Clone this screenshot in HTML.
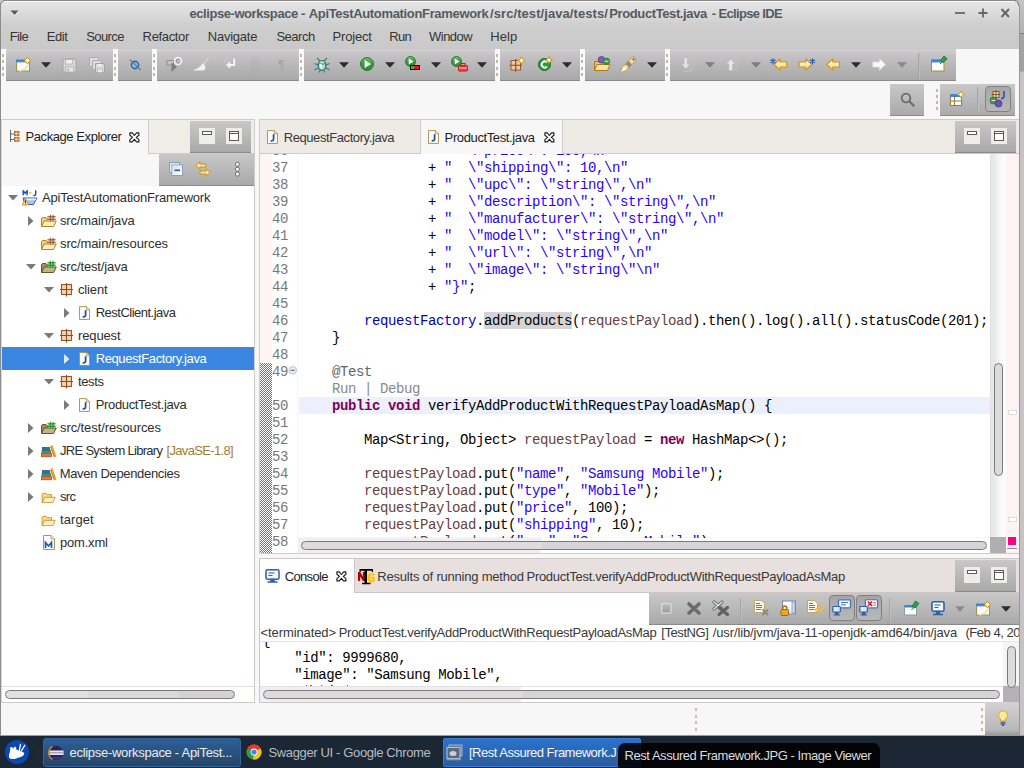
<!DOCTYPE html>
<html><head><meta charset="utf-8"><title>Eclipse IDE</title>
<style>
html,body{margin:0;padding:0;}
body{width:1024px;height:768px;overflow:hidden;background:#f7f7f7;font-family:"Liberation Sans",sans-serif;}
#root{position:relative;width:1024px;height:768px;overflow:hidden;background:#f7f7f7;}
.a{position:absolute;box-sizing:border-box;}
.t{position:absolute;white-space:pre;line-height:16px;height:16px;}
.s{font-family:"Liberation Sans",sans-serif;}
.m{font-family:"Liberation Mono",monospace;letter-spacing:-0.4014px;}
.clip{position:absolute;overflow:hidden;}
.k{color:#7f0055;font-weight:bold;}
.str{color:#2a00ff;}
.v{color:#6a3e3e;}
.f{color:#0000c0;}
.g{color:#646464;}
.occ{}
.cm{color:#8a8a8a;}

</style></head>
<body>
<div id="root">
<div class="a" style="left:1019px;top:0px;width:5px;height:735px;background:linear-gradient(#c4c4c4 0,#b2b2b2 33px,#7c7c7c 33px,#7c7c7c 34px,#a6a6a6 34px,#a0a0a0 71px,#c6c2c6 72px,#c6c2c6 100%);"></div>
<div class="a" style="left:0px;top:0px;width:1019px;height:49px;background:linear-gradient(#8a8a8a 0,#8a8a8a 1px,#fbfbfb 1px,#fbfbfb 2px,#e6e6e6 2px,#d2d2d2 22px,#cfcfcf 23px,#c9c9c9 49px);border-radius:5px 5px 0 0;"></div>
<div class="a" style="left:0px;top:0px;width:6px;height:6px;background:radial-gradient(circle at 6px 6px,rgba(0,0,0,0) 5px,#8a8a8a 5.2px,#8a8a8a 6px,#c8c8c8 6.3px);"></div>
<div class="a" style="left:1013px;top:0px;width:6px;height:6px;background:radial-gradient(circle at 0px 6px,rgba(0,0,0,0) 5px,#8a8a8a 5.2px,#8a8a8a 6px,#b8b8b8 6.3px);"></div>
<div class="a" style="left:0px;top:5px;width:1px;height:730px;background:#8c8c8c;"></div>
<div class="a" style="left:1019px;top:5px;width:1px;height:730px;background:#9a969a;"></div>
<svg class="a" style="left:10px;top:10px" width="10" height="6" viewBox="0 0 10 6"><path d="M0.5 0.5h8l-4 4.6z" fill="#5a5a5a"/><path d="M1 1.8l3.5 4 3.5-4" fill="none" stroke="#f4f4f4" stroke-width="0.9" opacity="0.8"/></svg>
<span id="title1" class="t s" style="left:189.40px;top:5.50px;font-size:13px;color:#555a62;letter-spacing:-0.424px;font-weight:bold;">eclipse-workspace -</span>
<span id="title2" class="t s" style="left:308.75px;top:5.50px;font-size:13px;color:#555a62;letter-spacing:-0.332px;font-weight:bold;">ApiTestAutomationFramework</span>
<span id="title3" class="t s" style="left:490.00px;top:5.50px;font-size:13px;color:#555a62;letter-spacing:0.078px;font-weight:bold;">/src/test/java/tests/</span>
<span id="title4" class="t s" style="left:609.30px;top:5.50px;font-size:13px;color:#555a62;letter-spacing:-0.391px;font-weight:bold;">ProductTest.java</span>
<span id="title5" class="t s" style="left:711.75px;top:5.50px;font-size:13px;color:#555a62;letter-spacing:-0.652px;font-weight:bold;">- Eclipse IDE</span>
<svg class="a" style="left:955px;top:8px" width="56" height="11" viewBox="0 0 56 11"><g stroke="#666" stroke-width="1.800" fill="none"><path d="M0 5h10"/><path d="M28 .5v9M23.500 5h9"/><path d="M46.500 1l7.500 8M54 1l-7.500 8" stroke-width="2"/></g></svg>
<span id="menu0" class="t s" style="left:9.80px;top:28.50px;font-size:13px;color:#343434;letter-spacing:-0.700px;">File</span>
<span id="menu1" class="t s" style="left:46.70px;top:28.50px;font-size:13px;color:#343434;letter-spacing:-0.396px;">Edit</span>
<span id="menu2" class="t s" style="left:86.30px;top:28.50px;font-size:13px;color:#343434;letter-spacing:-0.612px;">Source</span>
<span id="menu3" class="t s" style="left:142.60px;top:28.50px;font-size:13px;color:#343434;letter-spacing:-0.343px;">Refactor</span>
<span id="menu4" class="t s" style="left:207.80px;top:28.50px;font-size:13px;color:#343434;letter-spacing:-0.240px;">Navigate</span>
<span id="menu5" class="t s" style="left:276.40px;top:28.50px;font-size:13px;color:#343434;letter-spacing:-0.472px;">Search</span>
<span id="menu6" class="t s" style="left:332.60px;top:28.50px;font-size:13px;color:#343434;letter-spacing:-0.208px;">Project</span>
<span id="menu7" class="t s" style="left:389.30px;top:28.50px;font-size:13px;color:#343434;letter-spacing:-0.700px;">Run</span>
<span id="menu8" class="t s" style="left:429.00px;top:28.50px;font-size:13px;color:#343434;letter-spacing:-0.510px;">Window</span>
<span id="menu9" class="t s" style="left:490.30px;top:28.50px;font-size:13px;color:#343434;letter-spacing:0.065px;">Help</span>
<div class="a" style="left:1px;top:49px;width:955px;height:32px;background:linear-gradient(#cecdce 0,#cccbcc 3px,#cac7c9 3px,#c2c0c2 25%,#b4b3b4 65%,#a9a8a9 calc(100% - 1px),#8a8a8a calc(100% - 1px),#8a8a8a 100%);"></div>
<div class="a" style="left:1px;top:49px;width:5px;height:32px;background:#fafafa;"></div>
<div class="a" style="left:2px;top:54.0px;width:2px;height:3px;background:#c2b6a6;"></div>
<div class="a" style="left:2px;top:60.3px;width:2px;height:3px;background:#c2b6a6;"></div>
<div class="a" style="left:2px;top:66.6px;width:2px;height:3px;background:#c2b6a6;"></div>
<div class="a" style="left:2px;top:72.9px;width:2px;height:3px;background:#c2b6a6;"></div>
<div class="a" style="left:113px;top:49px;width:5px;height:32px;background:#fafafa;"></div>
<div class="a" style="left:114px;top:54.0px;width:2px;height:3px;background:#c2b6a6;"></div>
<div class="a" style="left:114px;top:60.3px;width:2px;height:3px;background:#c2b6a6;"></div>
<div class="a" style="left:114px;top:66.6px;width:2px;height:3px;background:#c2b6a6;"></div>
<div class="a" style="left:114px;top:72.9px;width:2px;height:3px;background:#c2b6a6;"></div>
<div class="a" style="left:152px;top:49px;width:5px;height:32px;background:#fafafa;"></div>
<div class="a" style="left:153px;top:54.0px;width:2px;height:3px;background:#c2b6a6;"></div>
<div class="a" style="left:153px;top:60.3px;width:2px;height:3px;background:#c2b6a6;"></div>
<div class="a" style="left:153px;top:66.6px;width:2px;height:3px;background:#c2b6a6;"></div>
<div class="a" style="left:153px;top:72.9px;width:2px;height:3px;background:#c2b6a6;"></div>
<div class="a" style="left:299px;top:49px;width:5px;height:32px;background:#fafafa;"></div>
<div class="a" style="left:300px;top:54.0px;width:2px;height:3px;background:#c2b6a6;"></div>
<div class="a" style="left:300px;top:60.3px;width:2px;height:3px;background:#c2b6a6;"></div>
<div class="a" style="left:300px;top:66.6px;width:2px;height:3px;background:#c2b6a6;"></div>
<div class="a" style="left:300px;top:72.9px;width:2px;height:3px;background:#c2b6a6;"></div>
<div class="a" style="left:495px;top:49px;width:5px;height:32px;background:#fafafa;"></div>
<div class="a" style="left:496px;top:54.0px;width:2px;height:3px;background:#c2b6a6;"></div>
<div class="a" style="left:496px;top:60.3px;width:2px;height:3px;background:#c2b6a6;"></div>
<div class="a" style="left:496px;top:66.6px;width:2px;height:3px;background:#c2b6a6;"></div>
<div class="a" style="left:496px;top:72.9px;width:2px;height:3px;background:#c2b6a6;"></div>
<div class="a" style="left:580px;top:49px;width:5px;height:32px;background:#fafafa;"></div>
<div class="a" style="left:581px;top:54.0px;width:2px;height:3px;background:#c2b6a6;"></div>
<div class="a" style="left:581px;top:60.3px;width:2px;height:3px;background:#c2b6a6;"></div>
<div class="a" style="left:581px;top:66.6px;width:2px;height:3px;background:#c2b6a6;"></div>
<div class="a" style="left:581px;top:72.9px;width:2px;height:3px;background:#c2b6a6;"></div>
<div class="a" style="left:665px;top:49px;width:5px;height:32px;background:#fafafa;"></div>
<div class="a" style="left:666px;top:54.0px;width:2px;height:3px;background:#c2b6a6;"></div>
<div class="a" style="left:666px;top:60.3px;width:2px;height:3px;background:#c2b6a6;"></div>
<div class="a" style="left:666px;top:66.6px;width:2px;height:3px;background:#c2b6a6;"></div>
<div class="a" style="left:666px;top:72.9px;width:2px;height:3px;background:#c2b6a6;"></div>
<div class="a" style="left:918px;top:53px;width:1px;height:26px;background:#a4a2a4;"></div>
<div class="a" style="left:919px;top:53px;width:1px;height:26px;background:#bebcbe;"></div>
<svg class="a" style="left:16px;top:57px" width="17" height="15" viewBox="0 0 17 15"><rect x=".5" y="3.500" width="13" height="10.500" fill="#f6fbff" stroke="#a88c48" stroke-width="1"/>
<rect x="0" y="2.500" width="13.500" height="2.800" fill="#3f86d6"/><path d="M3 14c5-.5 8-3 9.500-7.500" stroke="#f6dc98" stroke-width="1.300" fill="none"/>
<path d="M11.500 0l1.300 2.200 2.200 1.300-2.200 1.300-1.300 2.200-1.300-2.200-2.200-1.300 2.200-1.300z" fill="#fffbe8" stroke="#c49618" stroke-width="1"/></svg>
<svg class="a" style="left:41px;top:62px" width="10" height="6" viewBox="0 0 10 6"><path d="M0 0.3h10l-5 5.4z" fill="#2b2b2b"/></svg>
<svg class="a" style="left:62px;top:58px" width="15" height="15" viewBox="0 0 15 15"><g opacity="1"><path d="M1 1h12l1 1v12H1z" fill="#d6d6d6" stroke="#a4a4a4"/><rect x="3.5" y="1.500" width="7" height="4.500" fill="#efefef" stroke="#b4b4b4" stroke-width=".8"/><rect x="3.5" y="9" width="8" height="5" fill="#e6e6e6" stroke="#b0b0b0" stroke-width=".8"/><rect x="5" y="10.500" width="2" height="2.500" fill="#b8b8b8"/></g></svg>
<svg class="a" style="left:89px;top:57px" width="16" height="16" viewBox="0 0 16 16"><g><path d="M.5 .5h8l1 1v8h-9z" fill="#dcdcdc" stroke="#acacac"/><path d="M3.5 3.500h8l1 1v8h-9z" fill="#dcdcdc" stroke="#acacac"/><path d="M6.500 6.500h8l1 1v8h-9z" fill="#d6d6d6" stroke="#a4a4a4"/><rect x="8.5" y="7" width="4" height="2.500" fill="#f0f0f0"/><rect x="8.500" y="12" width="5" height="3.500" fill="#ececec" stroke="#b0b0b0" stroke-width=".6"/></g></svg>
<svg class="a" style="left:129px;top:59px" width="13" height="12" viewBox="0 0 13 12"><circle cx="6" cy="6" r="3.600" fill="#8fc0e8" stroke="#2a6ca8" stroke-width="1.600"/><path d="M.8 .8l11 10.200" stroke="#7a7a7a" stroke-width="1.300"/></svg>
<svg class="a" style="left:166px;top:56px" width="17" height="17" viewBox="0 0 17 17"><rect x="1" y="4.500" width="6.500" height="4.500" fill="#c4c4c4" stroke="#8e8e8e" stroke-width="1"/><path d="M5.500 6.500v9.500l5.500-5z" fill="#7c7c7c"/><circle cx="12" cy="5" r="3.600" fill="#c8c8c8" stroke="#f2f2f2" stroke-width="1.500"/><path d="M13.600 4a1.800 1.800 0 1 0 0 2.200" stroke="#8a8a8a" fill="none" stroke-width="1"/></svg>
<svg class="a" style="left:192px;top:55px" width="18" height="17" viewBox="0 0 18 17"><path d="M16.800 1l-6.300 7.700 2.300 1.800 4.600-8.200z" fill="#cdcdcd"/><path d="M10.300 8.500c-2 3.500-5.300 6-9.800 6.700 4 .6 9.500.4 12-.2 1.300-1.500 1-3.500.3-4.700z" fill="#f1f1f1"/></svg>
<svg class="a" style="left:222px;top:57px" width="15" height="13" viewBox="0 0 15 13"><g stroke="#f4f4f4" stroke-width="2" fill="none"><path d="M12.200 1.500v6.500H5"/></g><path d="M8.200 4.300L4 8l4.200 3.700z" fill="#f4f4f4"/><path d="M1.500 2h6M1.500 4.500h3.500" stroke="#c9c9c9" stroke-width="1"/></svg>
<svg class="a" style="left:249px;top:57px" width="14" height="15" viewBox="0 0 14 15"><g stroke="#acacac" stroke-width="1" fill="none" opacity=".7"><rect x="3" y="3.500" width="7" height="8.500"/><path d="M4.500 6h4M4.500 8.500h4M3 1h7M3 14h7"/></g></svg>
<span id="pil" class="t s" style="left:278.00px;top:57.00px;font-size:13px;color:#a4a4a4;letter-spacing:0.000px;">¶</span>
<svg class="a" style="left:314px;top:57px" width="16" height="16" viewBox="0 0 16 16"><g stroke="#3a7d7d" stroke-width="1.100" fill="none"><path d="M3 1l3 3M13 1l-3 3M.5 6.500l3.500 1.500M15.500 6.500l-3.500 1.500M.500 13l3.500-2M15.500 13l-3.500-2M5 15.500l1.500-2.500M11 15.500l-1.500-2.500"/></g>
<ellipse cx="8" cy="8.500" rx="3.800" ry="5" fill="#b6dcc0" stroke="#2f6f78" stroke-width="1.200"/><path d="M5.500 6.500c1.600 1 3.400 1 5 0" stroke="#2f6f78" fill="none"/><ellipse cx="7" cy="9" rx="1.200" ry="2.200" fill="#eefaf0"/></svg>
<svg class="a" style="left:339px;top:62px" width="10" height="6" viewBox="0 0 10 6"><path d="M0 0.3h10l-5 5.4z" fill="#2b2b2b"/></svg>
<svg class="a" style="left:360px;top:57px" width="14.0" height="14.0" viewBox="0 0 14.0 14.0"><defs><linearGradient id="pg360" x1="0" y1="0" x2="0" y2="1"><stop offset="0" stop-color="#6fc070"/><stop offset=".5" stop-color="#3a9a40"/><stop offset="1" stop-color="#2f8a36"/></linearGradient></defs><circle cx="7.0" cy="7.0" r="6.5" fill="url(#pg360)" stroke="#2a7a32" stroke-width="1"/><path d="M4.66 2.97L11.03 7.0L4.66 11.03z" fill="#fff"/></svg>
<svg class="a" style="left:385px;top:62px" width="10" height="6" viewBox="0 0 10 6"><path d="M0 0.3h10l-5 5.4z" fill="#2b2b2b"/></svg>
<svg class="a" style="left:405px;top:56px" width="11" height="11" viewBox="0 0 11 11"><defs><linearGradient id="pg405" x1="0" y1="0" x2="0" y2="1"><stop offset="0" stop-color="#6fc070"/><stop offset=".5" stop-color="#3a9a40"/><stop offset="1" stop-color="#2f8a36"/></linearGradient></defs><circle cx="5.5" cy="5.5" r="5" fill="url(#pg405)" stroke="#2a7a32" stroke-width="1"/><path d="M3.70 2.40L8.60 5.5L3.70 8.60z" fill="#fff"/></svg>
<div class="a" style="left:410px;top:65px;width:10px;height:5px;background:#111;"></div>
<div class="a" style="left:411px;top:66px;width:3px;height:3px;background:#24c03a;"></div>
<div class="a" style="left:414px;top:66px;width:5px;height:3px;background:#e01818;"></div>
<svg class="a" style="left:431px;top:62px" width="10" height="6" viewBox="0 0 10 6"><path d="M0 0.3h10l-5 5.4z" fill="#2b2b2b"/></svg>
<svg class="a" style="left:451px;top:56px" width="11" height="11" viewBox="0 0 11 11"><defs><linearGradient id="pg451" x1="0" y1="0" x2="0" y2="1"><stop offset="0" stop-color="#6fc070"/><stop offset=".5" stop-color="#3a9a40"/><stop offset="1" stop-color="#2f8a36"/></linearGradient></defs><circle cx="5.5" cy="5.5" r="5" fill="url(#pg451)" stroke="#2a7a32" stroke-width="1"/><path d="M3.70 2.40L8.60 5.5L3.70 8.60z" fill="#fff"/></svg>
<svg class="a" style="left:458px;top:63px" width="10" height="9" viewBox="0 0 10 9"><rect x="0.500" y="2.500" width="9" height="5.500" rx=".8" fill="#f04040" stroke="#d01818"/><rect x="3" y=".5" width="4" height="2.500" fill="none" stroke="#d01818"/><path d="M1 5h8" stroke="#ffe0e0" stroke-width=".9"/></svg>
<svg class="a" style="left:477px;top:62px" width="10" height="6" viewBox="0 0 10 6"><path d="M0 0.3h10l-5 5.4z" fill="#2b2b2b"/></svg>
<svg class="a" style="left:509px;top:56px" width="17" height="16" viewBox="0 0 17 16"><g><rect x="2" y="4.500" width="9.500" height="9.500" fill="#ecc9a0" stroke="#9a5b2c" stroke-width="1"/><path d="M6.700 3v12.500M.5 9.200h12.500" stroke="#8a4a24" stroke-width="1.100"/><path d="M12.500 .8l1.300 2.400 2.400 1.300-2.400 1.300-1.300 2.400-1.300-2.400-2.400-1.300 2.400-1.300z" fill="#fffbe8" stroke="#c49618" stroke-width="1"/></g></svg>
<svg class="a" style="left:537px;top:56px" width="17" height="16" viewBox="0 0 17 16"><circle cx="7.500" cy="8.500" r="6" fill="#2f9a3a" stroke="#1a6a25"/><path d="M10 6.300a3.100 3.100 0 1 0 0 4.400" stroke="#fff" stroke-width="1.900" fill="none"/><path d="M12 .5l1.200 2.300 2.300 1.200-2.300 1.200-1.200 2.300-1.200-2.300-2.300-1.200 2.300-1.200z" fill="#fffbe8" stroke="#c49618" stroke-width="1"/></svg>
<svg class="a" style="left:562px;top:62px" width="10" height="6" viewBox="0 0 10 6"><path d="M0 0.3h10l-5 5.4z" fill="#2b2b2b"/></svg>
<svg class="a" style="left:594px;top:56px" width="17" height="16" viewBox="0 0 17 16"><path d="M.5 14.500V5.500h5l1.500 1.500h6.500v7.500z" fill="#f0c45a" stroke="#b07a1a"/><path d="M.500 14.500l2.500-6h13l-2.500 6z" fill="#fbe3a0" stroke="#b07a1a"/><circle cx="7.500" cy="3.800" r="3.300" fill="#7a62b8" stroke="#4a3a8a" stroke-width=".8"/><circle cx="12.500" cy="5.300" r="3.200" fill="#3f9a4a" stroke="#2a7a35" stroke-width=".8"/><path d="M10.500 5.300h4" stroke="#cfeccf" stroke-width="1"/></svg>
<svg class="a" style="left:620px;top:56px" width="18" height="17" viewBox="0 0 18 17"><path d="M1 16l2.500-6 9-9c2 0 3.500 1.500 3.500 3.500l-9 9z" fill="#f6dc9a" stroke="#b88a30" stroke-width=".9"/><path d="M3.500 10l3.500 3.500-6 2.500z" fill="#fff8e0"/><path d="M5.500 8l3.500 3.500 3-3-3.500-3.500z" fill="#8a8a8a"/><circle cx="13.500" cy="3.500" r="1" fill="#2a4a9a"/></svg>
<svg class="a" style="left:647px;top:62px" width="10" height="6" viewBox="0 0 10 6"><path d="M0 0.3h10l-5 5.4z" fill="#2b2b2b"/></svg>
<svg class="a" style="left:680px;top:57px" width="14" height="15" viewBox="0 0 14 15"><path d="M4 .500h3.500v6.500h2.500l-4.200 5-4.300-5h2.500z" fill="#e3e3e3" stroke="#bcbcbc" stroke-width=".8"/><g stroke="#c2c2c2" stroke-width="1"><path d="M9 2.500h4M10 5.500h3M11 8.500h2M9 11.500h4M2 14h11"/></g></svg>
<svg class="a" style="left:705px;top:62px" width="10" height="6" viewBox="0 0 10 6"><path d="M0 0.3h10l-5 5.4z" fill="#7e7e7e"/></svg>
<svg class="a" style="left:725px;top:56px" width="14" height="15" viewBox="0 0 14 15"><path d="M4 14.500h3.500V8h2.500l-4.200-5-4.300 5h2.500z" fill="#e9e9e9" stroke="#c0c0c0" stroke-width=".8"/><g stroke="#c2c2c2" stroke-width="1"><path d="M9 3.500h4M10 6.500h3M11 9.500h2M9 12.500h4M2 1h11"/></g></svg>
<svg class="a" style="left:751px;top:62px" width="10" height="6" viewBox="0 0 10 6"><path d="M0 0.3h10l-5 5.4z" fill="#7e7e7e"/></svg>
<svg class="a" style="left:770px;top:57px" width="18" height="15" viewBox="0 0 18 15"><defs><linearGradient id="gya" x1="0" y1="0" x2="0" y2="1"><stop offset="0" stop-color="#fffbe4"/><stop offset="1" stop-color="#fbd978"/></linearGradient></defs><g transform="translate(3.300,.5)"><path d="M.8 7l6-5.700v3.200h6.700v5H6.800v3.200z" fill="url(#gya)" stroke="#d0940e" stroke-width="1.100" stroke-linejoin="round"/></g><g stroke="#2a5aa8" stroke-width="1.100" transform="translate(0,1.300)"><path d="M3 0v6M.4 1.500l5.200 3M5.600 1.500l-5.200 3"/></g></svg>
<svg class="a" style="left:798px;top:57px" width="18" height="15" viewBox="0 0 18 15"><g transform="translate(.3,.5)"><path d="M13.500 7l-6-5.700v3.200H.8v5h6.700v3.200z" fill="url(#gya)" stroke="#d0940e" stroke-width="1.100" stroke-linejoin="round"/></g><g transform="translate(11.500,0)"><g stroke="#2a5aa8" stroke-width="1.100" transform="translate(0,1.300)"><path d="M3 0v6M.4 1.500l5.200 3M5.600 1.500l-5.200 3"/></g></g></svg>
<svg class="a" style="left:826px;top:57px" width="15" height="15" viewBox="0 0 15 15"><g transform="translate(0,.5)"><path d="M.8 7l6-5.700v3.200h6.700v5H6.800v3.200z" fill="url(#gya)" stroke="#d0940e" stroke-width="1.100" stroke-linejoin="round"/></g></svg>
<svg class="a" style="left:851px;top:62px" width="10" height="6" viewBox="0 0 10 6"><path d="M0 0.3h10l-5 5.4z" fill="#2b2b2b"/></svg>
<svg class="a" style="left:872px;top:57px" width="15" height="15" viewBox="0 0 15 15"><g transform="translate(0,.5)"><path d="M13.500 7l-6-5.700v3.200H.8v5h6.700v3.200z" fill="#f8f8f8" stroke="#dadada" stroke-width="1"/></g></svg>
<svg class="a" style="left:897px;top:62px" width="10" height="6" viewBox="0 0 10 6"><path d="M0 0.3h10l-5 5.4z" fill="#8a8a8a"/></svg>
<svg class="a" style="left:931px;top:55px" width="17" height="17" viewBox="0 0 17 17"><rect x=".5" y="5" width="12.500" height="11" fill="#fdfdf6" stroke="#b08a3a"/><rect x=".5" y="4.500" width="12.500" height="3" fill="#3f86d6"/><path d="M9 9l2.500-2.500" stroke="#555" stroke-width="1"/><path d="M9.500 5.500l3.500-4.500 3.200 2.800-4 3.700z" fill="#2fa04a" stroke="#1a7030" stroke-width=".8"/></svg>
<div class="a" style="left:890px;top:84px;width:34px;height:32px;background:linear-gradient(#c9c8c9 0,#c0bfc0 30%,#abaaab calc(100% - 1px),#8c8c8c calc(100% - 1px),#8c8c8c 100%);"></div>
<svg class="a" style="left:900px;top:92px" width="16" height="16" viewBox="0 0 16 16"><circle cx="6" cy="6" r="4.300" fill="none" stroke="#6a6a6a" stroke-width="1.800"/><path d="M9.300 9.300l5 5" stroke="#6a6a6a" stroke-width="2.200"/></svg>
<div class="a" style="left:936px;top:89px;width:2px;height:3px;background:#c4b8a6;"></div>
<div class="a" style="left:936px;top:95px;width:2px;height:3px;background:#c4b8a6;"></div>
<div class="a" style="left:936px;top:101px;width:2px;height:3px;background:#c4b8a6;"></div>
<div class="a" style="left:936px;top:107px;width:2px;height:3px;background:#c4b8a6;"></div>
<div class="a" style="left:940px;top:84px;width:75px;height:32px;background:linear-gradient(#c9c8c9 0,#c0bfc0 30%,#abaaab calc(100% - 1px),#8c8c8c calc(100% - 1px),#8c8c8c 100%);"></div>
<svg class="a" style="left:950px;top:91px" width="15" height="16" viewBox="0 0 15 16"><rect x=".5" y="3.500" width="11" height="11" fill="#fdfdf6" stroke="#a07a3a"/><rect x=".5" y="3" width="11" height="3" fill="#3f86d6"/><path d="M4.500 6v8.500M.500 10h11" stroke="#a07a3a"/><path d="M11 0l1.200 2.300 2.300 1.200-2.300 1.200-1.200 2.300-1.200-2.300-2.300-1.200 2.300-1.200z" fill="#fff7d0" stroke="#c89a20" stroke-width=".9"/></svg>
<div class="a" style="left:977px;top:87px;width:1px;height:26px;background:#a4a4a4;"></div>
<div class="a" style="left:978px;top:87px;width:1px;height:26px;background:#c0c0c0;"></div>
<div class="a" style="left:985px;top:86px;width:26px;height:26px;background:linear-gradient(#a9a9a9,#b7b7b7);border:1px solid #838383;border-radius:4px;"></div>
<svg class="a" style="left:989px;top:90px" width="18" height="18" viewBox="0 0 18 18"><g><rect x="4" y="1.500" width="6" height="6" fill="#f2d8ac" stroke="#8a4a24" stroke-width=".9"/><path d="M7 .2v8.600M2.700 4.500h8.600" stroke="#8a4a24" stroke-width=".9"/><path d="M15 1v5c0 2-1.500 2.500-3 2.500" stroke="#2a5ab8" stroke-width="1.700" fill="none"/><circle cx="4.500" cy="10.500" r="3.500" fill="#3f9a4a" stroke="#2a7a35" stroke-width=".8"/><path d="M2.500 10.500h4" stroke="#d8f0d8"/><circle cx="9.500" cy="13.500" r="3.500" fill="#6a52b0" stroke="#4a3a8a" stroke-width=".8"/></g></svg>
<div class="a" style="left:1px;top:119px;width:254px;height:584px;border:1px solid #cfcbc5;border-left:1px solid #dcd8d4;background:#f7f7f7;"></div>
<div class="a" style="left:148px;top:120px;width:106px;height:34px;background:#f0ede8;border-left:1px solid #cfcbc5;border-bottom:1px solid #cfcbc5;"></div>
<div class="a" style="left:190px;top:121px;width:61px;height:32px;background:linear-gradient(#c9c7c7 0,#bdbdbd 35%,#a9a9a9 calc(100% - 1px),#8a8a8a calc(100% - 1px),#8a8a8a 100%);"></div>
<div class="a" style="left:199px;top:128px;width:16px;height:16px;background:#f0ede8;"></div>
<div class="a" style="left:226px;top:128px;width:16px;height:16px;background:#f0ede8;"></div>
<svg class="a" style="left:202px;top:131px" width="10" height="5" viewBox="0 0 10 5"><rect x=".5" y=".5" width="9" height="3" fill="#fff" stroke="#5a5a5a"/></svg>
<svg class="a" style="left:229px;top:131px" width="10" height="10" viewBox="0 0 10 10"><rect x=".5" y=".5" width="9" height="9" fill="#fff" stroke="#5a5a5a"/><path d="M.5 2.500h9" stroke="#5a5a5a" stroke-width="1"/></svg>
<div class="a" style="left:159px;top:154px;width:95px;height:32px;background:linear-gradient(#c9c7c7 0,#bdbdbd 35%,#a9a9a9 calc(100% - 1px),#8a8a8a calc(100% - 1px),#8a8a8a 100%);"></div>
<svg class="a" style="left:169px;top:162px" width="15" height="15" viewBox="0 0 15 15"><rect x=".5" y=".5" width="10" height="10" fill="#dfe8f2" stroke="#8a9ab8"/><rect x="3" y="3" width="10.500" height="10.500" fill="#e6f0f2" stroke="#8a9ab8"/><rect x="3.500" y="3.500" width="9.500" height="9.500" fill="url(#gca)"/><path d="M5.500 8.300h5.500" stroke="#1f5fa8" stroke-width="1.600"/><defs><linearGradient id="gca" x1="0" y1="0" x2="1" y2="1"><stop offset="0" stop-color="#cfe0ee"/><stop offset="1" stop-color="#fff"/></linearGradient></defs></svg>
<svg class="a" style="left:195px;top:161px" width="16" height="17" viewBox="0 0 16 17"><path d="M.8 4.500l4-3.700v2.200h6.200v3H4.800v2.200z" fill="#fbe6a8" stroke="#c8901c" stroke-width="1" stroke-linejoin="round"/><path d="M15.200 11.500l-4-3.700v2.200H5v3h6.200v2.200z" fill="#fbe6a8" stroke="#c8901c" stroke-width="1" stroke-linejoin="round"/></svg>
<svg class="a" style="left:234px;top:161px" width="7" height="17" viewBox="0 0 7 17"><g fill="#fff" stroke="#6a6a6a" stroke-width="1"><circle cx="3.400" cy="3.300" r="2"/><circle cx="3.400" cy="8.200" r="2"/><circle cx="3.400" cy="13.100" r="2"/></g></svg>
<svg class="a" style="left:10px;top:130px" width="10" height="12" viewBox="0 0 10 12"><path d="M.5 0v12M.500 4h4M.500 9.500h4" stroke="#5a6a7a" stroke-width="1" fill="none"/><rect x="4.500" y="1.500" width="4.500" height="4" fill="#d89050" stroke="#a4602a" stroke-width=".8"/><rect x="4.500" y="7.300" width="4.500" height="4" fill="#d89050" stroke="#a4602a" stroke-width=".8"/><path d="M6.700 1.500v4M4.500 3.500h4.500M6.700 7.300v4M4.500 9.300h4.500" stroke="#f6d8b0" stroke-width=".6"/></svg>
<span id="pe_title" class="t s" style="left:25.50px;top:129.00px;font-size:13px;color:#1e1e1e;letter-spacing:-0.419px;">Package Explorer</span>
<svg class="a" style="left:129px;top:131.5px" width="11" height="11" viewBox="0 0 11 11"><g transform="scale(.9)"><path d="M1 1h2.600L6 3.900 8.400 1H11v2.600L8.100 6 11 8.400V11H8.400L6 8.100 3.600 11H1V8.400L3.900 6 1 3.600z" fill="#fff" stroke="#1a1a1a" stroke-width="1.250" stroke-linejoin="round"/></g></svg>
<div class="a" style="left:2px;top:186px;width:252px;height:516px;background:#fff;"></div>
<div class="a" style="left:2px;top:347px;width:252px;height:23px;background:#3b86e0;"></div>
<div class="a" style="left:2px;top:686px;width:252px;height:1px;background:#e4e0e0;"></div>
<div class="a" style="left:5px;top:690px;width:230px;height:9px;background:linear-gradient(90deg,#e0e0e0 0,#e0e0e0 36%,#dadada 36%,#dadada 76%,#d6d2d2 76%);border:1px solid #7a7a7a;border-radius:5px;"></div>
<svg class="a" style="left:8px;top:195px" width="10" height="6" viewBox="0 0 10 6"><path d="M0 0h10l-5 5.500z" fill="#7a7a7a"/></svg>
<svg class="a" style="left:22px;top:190px" width="17" height="16" viewBox="0 0 17 16"><path d="M1 8h14l-3.500 6.500H3z" fill="#a9c4ee" stroke="#3a5aa8" stroke-width="1"/><path d="M3.500 8.500h11l-1 1.800h-9z" fill="#e8f0ff"/><path d="M1.200 5.200V.8l2 2.500 2-2.500v4.400" stroke="#1a56b0" stroke-width="1.450" fill="none"/><path d="M13.700 .3v3.700c0 1.300-1.100 1.600-2.300 1.300" stroke="#1a56b0" stroke-width="1.450" fill="none"/><path d="M7.500 2l1.500 1.500M9 2l-1.500 1.500" stroke="#c8901c" stroke-width=".8"/><path d="M3.500 8.500l3.300 6.500H.2z" fill="#f8d98a" stroke="#b8862a" stroke-width=".8"/><path d="M3.500 10.500v2.500M3.500 13.700v.6" stroke="#3a2a0a" stroke-width="1"/></svg>
<span id="tree0" class="t s" style="left:42.00px;top:189.50px;font-size:13px;color:#2e2e2e;letter-spacing:-0.196px;">ApiTestAutomationFramework</span>
<svg class="a" style="left:28px;top:216px" width="6" height="10" viewBox="0 0 6 10"><path d="M0 0v10l5.500-5z" fill="#7a7a7a"/></svg>
<svg class="a" style="left:41px;top:214px" width="16" height="14" viewBox="0 0 16 14"><path d="M.5 12.500V4.500l1-1h3.500l1 1.500h5v2" fill="#f2cc80" stroke="#b8821e"/><path d="M.500 12.500l2.800-5.500h12l-2.800 5.500z" fill="#fdedc0" stroke="#b8821e"/><rect x="7.300" y="1.800" width="6.500" height="5" fill="#f3d8b8"/><path d="M9.300 .8v6.700M12 .8v6.700M6.300 2.800h8.500M6.300 5.300h8.500" stroke="#8a4a22" stroke-width=".95" fill="none"/></svg>
<span id="tree1" class="t s" style="left:60.00px;top:212.50px;font-size:13px;color:#2e2e2e;letter-spacing:-0.154px;">src/main/java</span>
<svg class="a" style="left:41px;top:237px" width="16" height="14" viewBox="0 0 16 14"><path d="M.5 12.500V4.500l1-1h3.500l1 1.500h5v2" fill="#f2cc80" stroke="#b8821e"/><path d="M.500 12.500l2.800-5.500h12l-2.800 5.500z" fill="#fdedc0" stroke="#b8821e"/><rect x="7.300" y="1.800" width="6.500" height="5" fill="#f3d8b8"/><path d="M9.300 .8v6.700M12 .8v6.700M6.300 2.800h8.500M6.300 5.300h8.500" stroke="#8a4a22" stroke-width=".95" fill="none"/></svg>
<span id="tree2" class="t s" style="left:60.00px;top:235.50px;font-size:13px;color:#2e2e2e;letter-spacing:-0.106px;">src/main/resources</span>
<svg class="a" style="left:26px;top:264px" width="10" height="6" viewBox="0 0 10 6"><path d="M0 0h10l-5 5.500z" fill="#7a7a7a"/></svg>
<svg class="a" style="left:41px;top:260px" width="16" height="14" viewBox="0 0 16 14"><path d="M.5 12.500V4.500l1-1h3.500l1 1.500h5v2" fill="#a09060" stroke="#6a5428"/><path d="M.500 12.500l2.800-5.500h12l-2.800 5.500z" fill="#c0b488" stroke="#6a5428"/><rect x="7.300" y="1.800" width="6.500" height="5" fill="#8fd48f"/><path d="M9.300 .8v6.700M12 .8v6.700M6.300 2.800h8.500M6.300 5.300h8.500" stroke="#1c8a1c" stroke-width=".95" fill="none"/></svg>
<span id="tree3" class="t s" style="left:60.00px;top:258.50px;font-size:13px;color:#2e2e2e;letter-spacing:-0.135px;">src/test/java</span>
<svg class="a" style="left:44px;top:287px" width="10" height="6" viewBox="0 0 10 6"><path d="M0 0h10l-5 5.500z" fill="#7a7a7a"/></svg>
<svg class="a" style="left:60px;top:283px" width="13" height="14" viewBox="0 0 13 14"><rect x="1.500" y="1.500" width="10" height="10" fill="#f0d6a8" stroke="#9a5630" stroke-width="1.100"/><path d="M6.500 0v13.500M0 6.500h13" stroke="#8c4a28" stroke-width="1.100"/></svg>
<span id="tree4" class="t s" style="left:78.00px;top:281.50px;font-size:13px;color:#2e2e2e;letter-spacing:-0.147px;">client</span>
<svg class="a" style="left:64px;top:308px" width="6" height="10" viewBox="0 0 6 10"><path d="M0 0v10l5.500-5z" fill="#7a7a7a"/></svg>
<svg class="a" style="left:79px;top:306px" width="11" height="14" viewBox="0 0 12 15"><path d="M.5 .5h7.500l3.500 3.500v10.500H.5z" fill="#fdfdfd" stroke="#b08a3a"/><path d="M8 .5v3.500h3.500" fill="#f3e2b8" stroke="#b08a3a" stroke-width=".8"/><path d="M7.200 4.500v5c0 1.800-1.200 2.400-3.200 2.200" stroke="#1f4fa0" stroke-width="1.900" fill="none"/></svg>
<span id="tree5" class="t s" style="left:95.70px;top:304.50px;font-size:13px;color:#2e2e2e;letter-spacing:-0.507px;">RestClient.java</span>
<svg class="a" style="left:44px;top:333px" width="10" height="6" viewBox="0 0 10 6"><path d="M0 0h10l-5 5.500z" fill="#7a7a7a"/></svg>
<svg class="a" style="left:60px;top:329px" width="13" height="14" viewBox="0 0 13 14"><rect x="1.500" y="1.500" width="10" height="10" fill="#f0d6a8" stroke="#9a5630" stroke-width="1.100"/><path d="M6.500 0v13.500M0 6.500h13" stroke="#8c4a28" stroke-width="1.100"/></svg>
<span id="tree6" class="t s" style="left:78.00px;top:327.50px;font-size:13px;color:#2e2e2e;letter-spacing:-0.125px;">request</span>
<svg class="a" style="left:64px;top:354px" width="6" height="10" viewBox="0 0 6 10"><path d="M0 0v10l5.500-5z" fill="#dfe9f8"/></svg>
<svg class="a" style="left:79px;top:352px" width="11" height="14" viewBox="0 0 12 15"><path d="M.5 .5h7.500l3.500 3.500v10.500H.5z" fill="#fdfdfd" stroke="#b08a3a"/><path d="M8 .5v3.500h3.500" fill="#f3e2b8" stroke="#b08a3a" stroke-width=".8"/><path d="M7.200 4.500v5c0 1.800-1.200 2.400-3.200 2.200" stroke="#1f4fa0" stroke-width="1.900" fill="none"/></svg>
<span id="tree7" class="t s" style="left:95.70px;top:350.50px;font-size:13px;color:#fff;letter-spacing:-0.401px;">RequestFactory.java</span>
<svg class="a" style="left:44px;top:379px" width="10" height="6" viewBox="0 0 10 6"><path d="M0 0h10l-5 5.500z" fill="#7a7a7a"/></svg>
<svg class="a" style="left:60px;top:375px" width="13" height="14" viewBox="0 0 13 14"><rect x="1.500" y="1.500" width="10" height="10" fill="#f0d6a8" stroke="#9a5630" stroke-width="1.100"/><path d="M6.500 0v13.500M0 6.500h13" stroke="#8c4a28" stroke-width="1.100"/></svg>
<span id="tree8" class="t s" style="left:78.00px;top:373.50px;font-size:13px;color:#2e2e2e;letter-spacing:-0.363px;">tests</span>
<svg class="a" style="left:64px;top:400px" width="6" height="10" viewBox="0 0 6 10"><path d="M0 0v10l5.500-5z" fill="#7a7a7a"/></svg>
<svg class="a" style="left:79px;top:398px" width="11" height="14" viewBox="0 0 12 15"><path d="M.5 .5h7.500l3.500 3.500v10.500H.5z" fill="#fdfdfd" stroke="#b08a3a"/><path d="M8 .5v3.500h3.500" fill="#f3e2b8" stroke="#b08a3a" stroke-width=".8"/><path d="M7.200 4.500v5c0 1.800-1.200 2.400-3.200 2.200" stroke="#1f4fa0" stroke-width="1.900" fill="none"/></svg>
<span id="tree9" class="t s" style="left:95.70px;top:396.50px;font-size:13px;color:#2e2e2e;letter-spacing:-0.338px;">ProductTest.java</span>
<svg class="a" style="left:28px;top:423px" width="6" height="10" viewBox="0 0 6 10"><path d="M0 0v10l5.500-5z" fill="#7a7a7a"/></svg>
<svg class="a" style="left:41px;top:421px" width="16" height="14" viewBox="0 0 16 14"><path d="M.5 12.500V4.500l1-1h3.500l1 1.500h5v2" fill="#a09060" stroke="#6a5428"/><path d="M.500 12.500l2.800-5.500h12l-2.800 5.500z" fill="#c0b488" stroke="#6a5428"/><rect x="7.300" y="1.800" width="6.500" height="5" fill="#8fd48f"/><path d="M9.300 .8v6.700M12 .8v6.700M6.300 2.800h8.500M6.300 5.300h8.500" stroke="#1c8a1c" stroke-width=".95" fill="none"/></svg>
<span id="tree10" class="t s" style="left:60.00px;top:419.50px;font-size:13px;color:#2e2e2e;letter-spacing:-0.093px;">src/test/resources</span>
<svg class="a" style="left:28px;top:446px" width="6" height="10" viewBox="0 0 6 10"><path d="M0 0v10l5.500-5z" fill="#7a7a7a"/></svg>
<svg class="a" style="left:41px;top:444px" width="16" height="14" viewBox="0 0 16 14"><rect x="1.500" y="3.500" width="7" height="2.800" fill="#2f6fa8" stroke="#1d4f80" stroke-width=".7"/><rect x="1" y="6.300" width="8.500" height="2.900" fill="#3f9a72" stroke="#2a7050" stroke-width=".7"/><rect x=".5" y="9.200" width="10" height="3.600" fill="#d8784a" stroke="#a04a24" stroke-width=".7"/><path d="M10.300 1.500l4.200 11.500" stroke="#eba030" stroke-width="2.300"/><path d="M9.600 2.800l3.300 10" stroke="#b87614" stroke-width=".8"/></svg>
<span id="tree11" class="t s" style="left:60.00px;top:442.50px;font-size:13px;color:#2e2e2e;letter-spacing:-0.698px;">JRE System Library</span>
<svg class="a" style="left:28px;top:469px" width="6" height="10" viewBox="0 0 6 10"><path d="M0 0v10l5.500-5z" fill="#7a7a7a"/></svg>
<svg class="a" style="left:41px;top:467px" width="16" height="14" viewBox="0 0 16 14"><rect x="1.500" y="3.500" width="7" height="2.800" fill="#2f6fa8" stroke="#1d4f80" stroke-width=".7"/><rect x="1" y="6.300" width="8.500" height="2.900" fill="#3f9a72" stroke="#2a7050" stroke-width=".7"/><rect x=".5" y="9.200" width="10" height="3.600" fill="#d8784a" stroke="#a04a24" stroke-width=".7"/><path d="M10.300 1.500l4.200 11.500" stroke="#eba030" stroke-width="2.300"/><path d="M9.600 2.800l3.300 10" stroke="#b87614" stroke-width=".8"/></svg>
<span id="tree12" class="t s" style="left:59.70px;top:465.50px;font-size:13px;color:#2e2e2e;letter-spacing:-0.320px;">Maven Dependencies</span>
<svg class="a" style="left:28px;top:492px" width="6" height="10" viewBox="0 0 6 10"><path d="M0 0v10l5.500-5z" fill="#7a7a7a"/></svg>
<svg class="a" style="left:41px;top:491.5px" width="15.5" height="11.5" viewBox="0 0 16 13"><path d="M.5 12V2.500l1-1h3.500l1.200 1.500h5v3" fill="#f8dc90" stroke="#c8901c"/><path d="M.500 12l2.800-6h12l-2.800 6z" fill="#fdf0c4" stroke="#c8901c"/></svg>
<span id="tree13" class="t s" style="left:60.00px;top:488.50px;font-size:13px;color:#2e2e2e;letter-spacing:-0.665px;">src</span>
<svg class="a" style="left:41px;top:514.5px" width="15.5" height="11.5" viewBox="0 0 16 13"><path d="M.5 12V2.500l1-1h3.500l1.200 1.500h5v3" fill="#f8dc90" stroke="#c8901c"/><path d="M.500 12l2.800-6h12l-2.800 6z" fill="#fdf0c4" stroke="#c8901c"/></svg>
<span id="tree14" class="t s" style="left:60.00px;top:511.50px;font-size:13px;color:#2e2e2e;letter-spacing:0.074px;">target</span>
<svg class="a" style="left:43px;top:535px" width="12" height="15" viewBox="0 0 12 15"><path d="M.5 .5h7.500l3.500 3.500v10.500H.5z" fill="#fdfdfd" stroke="#a89860"/><path d="M8 .5v3.500h3.500" fill="#ece4cc" stroke="#a89860" stroke-width=".8"/><path d="M2.500 13v-5.500l3 3.500 3-3.500v5.500" stroke="#1f58b0" stroke-width="1.700" fill="none"/></svg>
<span id="tree15" class="t s" style="left:60.00px;top:534.50px;font-size:13px;color:#2e2e2e;letter-spacing:-0.205px;">pom.xml</span>
<span id="tree_jre" class="t s" style="left:166.50px;top:442.50px;font-size:13px;color:#a67c2e;letter-spacing:-0.665px;">[JavaSE-1.8]</span>
<div class="a" style="left:259px;top:119px;width:760px;height:435px;border:1px solid #cfcbc5;border-right:none;background:#fff;"></div>
<div class="a" style="left:260px;top:120px;width:759px;height:34px;background:#eeebe6;border-bottom:1px solid #cfcbc5;"></div>
<div class="a" style="left:420px;top:120px;width:143px;height:34px;background:#f7f7f7;border-left:1px solid #cfcbc5;border-right:1px solid #cfcbc5;"></div>
<svg class="a" style="left:267px;top:130px" width="11" height="14" viewBox="0 0 12 15"><path d="M.5 .5h7.500l3.500 3.500v10.500H.5z" fill="#fdfdfd" stroke="#b08a3a"/><path d="M8 .5v3.500h3.500" fill="#f3e2b8" stroke="#b08a3a" stroke-width=".8"/><path d="M7.200 4.500v5c0 1.800-1.200 2.400-3.200 2.200" stroke="#1f4fa0" stroke-width="1.900" fill="none"/></svg>
<span id="ed_tab1" class="t s" style="left:283.70px;top:129.50px;font-size:13px;color:#383838;letter-spacing:-0.413px;">RequestFactory.java</span>
<svg class="a" style="left:428px;top:130px" width="11" height="14" viewBox="0 0 12 15"><path d="M.5 .5h7.500l3.500 3.500v10.500H.5z" fill="#fdfdfd" stroke="#b08a3a"/><path d="M8 .5v3.500h3.500" fill="#f3e2b8" stroke="#b08a3a" stroke-width=".8"/><path d="M7.200 4.500v5c0 1.800-1.200 2.400-3.200 2.200" stroke="#1f4fa0" stroke-width="1.900" fill="none"/></svg>
<span id="ed_tab2" class="t s" style="left:444.60px;top:129.50px;font-size:13px;color:#1e1e1e;letter-spacing:-0.378px;">ProductTest.java</span>
<svg class="a" style="left:544px;top:131.5px" width="11" height="11" viewBox="0 0 11 11"><g transform="scale(.9)"><path d="M1 1h2.600L6 3.900 8.400 1H11v2.600L8.100 6 11 8.400V11H8.400L6 8.100 3.600 11H1V8.400L3.900 6 1 3.600z" fill="#fff" stroke="#1a1a1a" stroke-width="1.250" stroke-linejoin="round"/></g></svg>
<div class="a" style="left:955px;top:121px;width:61px;height:32px;background:linear-gradient(#c9c7c7 0,#bdbdbd 35%,#a9a9a9 calc(100% - 1px),#8a8a8a calc(100% - 1px),#8a8a8a 100%);"></div>
<div class="a" style="left:964px;top:128px;width:16px;height:16px;background:#f0ede8;"></div>
<div class="a" style="left:991px;top:128px;width:16px;height:16px;background:#f0ede8;"></div>
<svg class="a" style="left:967px;top:131px" width="10" height="5" viewBox="0 0 10 5"><rect x=".5" y=".5" width="9" height="3" fill="#fff" stroke="#5a5a5a"/></svg>
<svg class="a" style="left:994px;top:131px" width="10" height="10" viewBox="0 0 10 10"><rect x=".5" y=".5" width="9" height="9" fill="#fff" stroke="#5a5a5a"/><path d="M.5 2.500h9" stroke="#5a5a5a" stroke-width="1"/></svg>
<div class="a" style="left:260px;top:154px;width:12px;height:399px;background:#fdf4f4;"></div>
<div class="a" style="left:297px;top:154px;width:1px;height:383px;background:#fdf1f1;"></div>
<svg class="a" style="left:260px;top:363px" width="12" height="190" viewBox="0 0 12 190"><defs><pattern id="chk" width="2" height="2" patternUnits="userSpaceOnUse"><rect width="2" height="2" fill="#fff"/><rect width="1" height="1" fill="#2f7fe0"/><rect x="1" y="1" width="1" height="1" fill="#2f7fe0"/></pattern></defs><rect width="12" height="190" fill="url(#chk)" shape-rendering="crispEdges"/></svg>
<div class="a" style="left:484px;top:312px;width:88px;height:17px;background:#d4d4d4;"></div>
<div class="a" style="left:299px;top:397px;width:691px;height:17px;background:#ebf0fc;"></div>
<div class="a" style="left:990px;top:154px;width:16px;height:383px;background:linear-gradient(90deg,#dedede 0,#e6e6e6 6%,#ececec 35%,#f6f6f6 60%,#fdfbfd 80%);"></div>
<div class="a" style="left:1006px;top:154px;width:13px;height:399px;background:#fdf3f3;"></div>
<div class="a" style="left:994px;top:363px;width:9px;height:113px;background:#dcdcdc;border:1px solid #7a7a7a;border-radius:5px;"></div>
<svg class="a" style="left:1008px;top:410px" width="9" height="6" viewBox="0 0 9 6"><rect x=".5" y=".5" width="8" height="4" fill="#fff" stroke="#dcdcdc"/></svg>
<svg class="a" style="left:1008px;top:517px" width="9" height="6" viewBox="0 0 9 6"><rect x=".5" y=".5" width="8" height="4" fill="#fff" stroke="#dcdcdc"/></svg>
<div class="a" style="left:1008px;top:537px;width:8px;height:8px;background:#ff0080;"></div>
<div class="a" style="left:1007px;top:548px;width:10px;height:1px;background:#8a8a8a;"></div>
<div class="a" style="left:298px;top:537px;width:692px;height:16px;background:linear-gradient(90deg,#f0eef1 0,#f0eef1 243px,#fff 243px);border-top:1px solid #f4f3f5;"></div>
<div class="a" style="left:990px;top:537px;width:16px;height:16px;background:#b0aeb0;"></div>
<div class="a" style="left:301px;top:541px;width:686px;height:9px;background:linear-gradient(90deg,#dddbde 0,#dddbde 240px,#d6d4d6 240px);border:1px solid #7a7a7a;border-radius:5px;"></div>
<div class="clip" style="left:298px;top:154px;width:692px;height:384px;"><div style="position:absolute;left:-298px;top:-154px;">
<span class="t m" style="left:300px;top:143.27px;font-size:14px;color:#000;">                + <span class="str">&quot;  \&quot;price\&quot;: 100,\n&quot;</span></span>
<span class="t m" style="left:300px;top:160.27px;font-size:14px;color:#000;">                + <span class="str">&quot;  \&quot;shipping\&quot;: 10,\n&quot;</span></span>
<span class="t m" style="left:300px;top:177.27px;font-size:14px;color:#000;">                + <span class="str">&quot;  \&quot;upc\&quot;: \&quot;string\&quot;,\n&quot;</span></span>
<span class="t m" style="left:300px;top:194.27px;font-size:14px;color:#000;">                + <span class="str">&quot;  \&quot;description\&quot;: \&quot;string\&quot;,\n&quot;</span></span>
<span class="t m" style="left:300px;top:211.27px;font-size:14px;color:#000;">                + <span class="str">&quot;  \&quot;manufacturer\&quot;: \&quot;string\&quot;,\n&quot;</span></span>
<span class="t m" style="left:300px;top:228.27px;font-size:14px;color:#000;">                + <span class="str">&quot;  \&quot;model\&quot;: \&quot;string\&quot;,\n&quot;</span></span>
<span class="t m" style="left:300px;top:245.27px;font-size:14px;color:#000;">                + <span class="str">&quot;  \&quot;url\&quot;: \&quot;string\&quot;,\n&quot;</span></span>
<span class="t m" style="left:300px;top:262.27px;font-size:14px;color:#000;">                + <span class="str">&quot;  \&quot;image\&quot;: \&quot;string\&quot;\n&quot;</span></span>
<span class="t m" style="left:300px;top:279.27px;font-size:14px;color:#000;">                + <span class="str">&quot;}&quot;</span>;</span>
<span class="t m" style="left:300px;top:296.27px;font-size:14px;color:#000;"></span>
<span class="t m" style="left:300px;top:313.27px;font-size:14px;color:#000;">        <span class="f">requestFactory</span>.<span class="occ">addProducts</span>(<span class="v">requestPayload</span>).then().log().all().statusCode(201);</span>
<span class="t m" style="left:300px;top:330.27px;font-size:14px;color:#000;">    }</span>
<span class="t m" style="left:300px;top:347.27px;font-size:14px;color:#000;"></span>
<span class="t m" style="left:300px;top:364.27px;font-size:14px;color:#000;"><span class="g">    @Test</span></span>
<span class="t m" style="left:300px;top:381.27px;font-size:14px;color:#000;"><span class="cm">    Run | Debug</span></span>
<span class="t m" style="left:300px;top:398.27px;font-size:14px;color:#000;"><span class="k">    public</span> <span class="k">void</span> verifyAddProductWithRequestPayloadAsMap() {</span>
<span class="t m" style="left:300px;top:415.27px;font-size:14px;color:#000;"></span>
<span class="t m" style="left:300px;top:432.27px;font-size:14px;color:#000;">        Map&lt;String, Object&gt; <span class="v">requestPayload</span> = <span class="k">new</span> HashMap&lt;&gt;();</span>
<span class="t m" style="left:300px;top:449.27px;font-size:14px;color:#000;"></span>
<span class="t m" style="left:300px;top:466.27px;font-size:14px;color:#000;"><span class="v">        requestPayload</span>.put(<span class="str">&quot;name&quot;</span>, <span class="str">&quot;Samsung Mobile&quot;</span>);</span>
<span class="t m" style="left:300px;top:483.27px;font-size:14px;color:#000;"><span class="v">        requestPayload</span>.put(<span class="str">&quot;type&quot;</span>, <span class="str">&quot;Mobile&quot;</span>);</span>
<span class="t m" style="left:300px;top:500.27px;font-size:14px;color:#000;"><span class="v">        requestPayload</span>.put(<span class="str">&quot;price&quot;</span>, 100);</span>
<span class="t m" style="left:300px;top:517.27px;font-size:14px;color:#000;"><span class="v">        requestPayload</span>.put(<span class="str">&quot;shipping&quot;</span>, 10);</span>
<span class="t m" style="left:300px;top:534.27px;font-size:14px;color:#000;"><span class="v">        requestPayload</span>.put(<span class="str">&quot;upc&quot;</span>, <span class="str">&quot;Samsung Mobile&quot;</span>);</span>
</div></div>
<div class="clip" style="left:260px;top:154px;width:38px;height:399px;"><div style="position:absolute;left:-260px;top:-154px;">
<span id="ln36" class="t m" style="left:272.00px;top:143.27px;font-size:14px;color:#787878;">36</span>
<span id="ln37" class="t m" style="left:272.00px;top:160.27px;font-size:14px;color:#787878;">37</span>
<span id="ln38" class="t m" style="left:272.00px;top:177.27px;font-size:14px;color:#787878;">38</span>
<span id="ln39" class="t m" style="left:272.00px;top:194.27px;font-size:14px;color:#787878;">39</span>
<span id="ln40" class="t m" style="left:272.00px;top:211.27px;font-size:14px;color:#787878;">40</span>
<span id="ln41" class="t m" style="left:272.00px;top:228.27px;font-size:14px;color:#787878;">41</span>
<span id="ln42" class="t m" style="left:272.00px;top:245.27px;font-size:14px;color:#787878;">42</span>
<span id="ln43" class="t m" style="left:272.00px;top:262.27px;font-size:14px;color:#787878;">43</span>
<span id="ln44" class="t m" style="left:272.00px;top:279.27px;font-size:14px;color:#787878;">44</span>
<span id="ln45" class="t m" style="left:272.00px;top:296.27px;font-size:14px;color:#787878;">45</span>
<span id="ln46" class="t m" style="left:272.00px;top:313.27px;font-size:14px;color:#787878;">46</span>
<span id="ln47" class="t m" style="left:272.00px;top:330.27px;font-size:14px;color:#787878;">47</span>
<span id="ln48" class="t m" style="left:272.00px;top:347.27px;font-size:14px;color:#787878;">48</span>
<span id="ln49" class="t m" style="left:272.00px;top:364.27px;font-size:14px;color:#787878;">49</span>
<span id="ln50" class="t m" style="left:272.00px;top:398.27px;font-size:14px;color:#787878;">50</span>
<span id="ln51" class="t m" style="left:272.00px;top:415.27px;font-size:14px;color:#787878;">51</span>
<span id="ln52" class="t m" style="left:272.00px;top:432.27px;font-size:14px;color:#787878;">52</span>
<span id="ln53" class="t m" style="left:272.00px;top:449.27px;font-size:14px;color:#787878;">53</span>
<span id="ln54" class="t m" style="left:272.00px;top:466.27px;font-size:14px;color:#787878;">54</span>
<span id="ln55" class="t m" style="left:272.00px;top:483.27px;font-size:14px;color:#787878;">55</span>
<span id="ln56" class="t m" style="left:272.00px;top:500.27px;font-size:14px;color:#787878;">56</span>
<span id="ln57" class="t m" style="left:272.00px;top:517.27px;font-size:14px;color:#787878;">57</span>
<span id="ln58" class="t m" style="left:272.00px;top:534.27px;font-size:14px;color:#787878;">58</span>
</div></div>
<svg class="a" style="left:288px;top:366px" width="9" height="9" viewBox="0 0 9 9"><circle cx="4.700" cy="4.300" r="3.800" fill="#e6edf5" stroke="#b4c0d0" stroke-width=".9"/><path d="M2.700 4.300h4" stroke="#4a5868" stroke-width="1"/></svg>
<div class="a" style="left:259px;top:558px;width:760px;height:145px;border:1px solid #cdc6c4;border-right:none;background:#fff;"></div>
<div class="a" style="left:354px;top:559px;width:665px;height:34px;background:#e8e0df;border-bottom:1px solid #cdc6c4;border-left:1px solid #cdc6c4;"></div>
<svg class="a" style="left:265px;top:569px" width="15" height="14" viewBox="0 0 15 14"><rect x="1" y=".8" width="13" height="9.500" rx="1.500" fill="#f2f7fd" stroke="#2f5fa8" stroke-width="1.500"/><path d="M3.500 4h6M3.500 6.500h4" stroke="#2f5fa8" stroke-width="1"/><path d="M6 10.500h3v1.500h-3zM2.500 13h10" stroke="#2f5fa8" stroke-width="1.400" fill="#2f5fa8"/></svg>
<span id="con_tab" class="t s" style="left:284.70px;top:568.50px;font-size:13px;color:#1e1e1e;letter-spacing:-0.661px;">Console</span>
<svg class="a" style="left:336px;top:570.5px" width="11" height="11" viewBox="0 0 11 11"><g transform="scale(.9)"><path d="M1 1h2.600L6 3.900 8.400 1H11v2.600L8.100 6 11 8.400V11H8.400L6 8.100 3.600 11H1V8.400L3.900 6 1 3.600z" fill="#fff" stroke="#1a1a1a" stroke-width="1.250" stroke-linejoin="round"/></g></svg>
<svg class="a" style="left:358px;top:569px" width="17" height="16" viewBox="0 0 17 16"><path d="M0 3h2.300l2.600 4.500V3H7v9H4.800L2.200 7.500V12H0z" fill="#a80808"/><path d="M16.200 5.200c-3-2.200-6.400-.8-6.400 3.300 0 4.200 3.200 5.800 6.600 4V8h-3.300v1.800h1.300v1.700c-1.500.6-2.500-.5-2.500-3 0-2.700 1.700-3.400 3.700-1.800z" fill="#fdc800" stroke="#fdc800" stroke-width=".7"/><path d="M1.500 0h13.500v3h-1.200V1.800H9V13.700h3.500v1.500H4v-1.500h2.500V1.800H2.700V3H1.500z" fill="#000"/></svg>
<span id="con_tab2a" class="t s" style="left:377.30px;top:568.50px;font-size:13px;color:#383838;letter-spacing:-0.209px;">Results of running method</span>
<span id="con_tab2b" class="t s" style="left:526.50px;top:568.50px;font-size:13px;color:#383838;letter-spacing:-0.288px;">ProductTest.verifyAddProductWithRequestPayloadAsMap</span>
<div class="a" style="left:955px;top:560px;width:61px;height:32px;background:linear-gradient(#c9c7c7 0,#bdbdbd 35%,#a9a9a9 calc(100% - 1px),#8a8a8a calc(100% - 1px),#8a8a8a 100%);"></div>
<div class="a" style="left:964px;top:567px;width:16px;height:16px;background:#f0ede8;"></div>
<div class="a" style="left:991px;top:567px;width:16px;height:16px;background:#f0ede8;"></div>
<svg class="a" style="left:967px;top:570px" width="10" height="5" viewBox="0 0 10 5"><rect x=".5" y=".5" width="9" height="3" fill="#fff" stroke="#5a5a5a"/></svg>
<svg class="a" style="left:994px;top:570px" width="10" height="10" viewBox="0 0 10 10"><rect x=".5" y=".5" width="9" height="9" fill="#fff" stroke="#5a5a5a"/><path d="M.5 2.500h9" stroke="#5a5a5a" stroke-width="1"/></svg>
<div class="a" style="left:649px;top:593px;width:370px;height:32px;background:linear-gradient(#c9c7c7 0,#bdbdbd 35%,#a9a9a9 calc(100% - 1px),#8a8a8a calc(100% - 1px),#8a8a8a 100%);"></div>
<svg class="a" style="left:661px;top:603px" width="11" height="11" viewBox="0 0 11 11"><defs><linearGradient id="gtm" x1="0" y1="0" x2="0" y2="1"><stop offset="0" stop-color="#bcbcbc"/><stop offset="1" stop-color="#9c9c9c"/></linearGradient></defs><rect x=".8" y=".6" width="9.200" height="9.600" rx="1" fill="url(#gtm)" stroke="#dcdcdc" stroke-width="1.200"/></svg>
<svg class="a" style="left:686px;top:601px" width="16" height="15" viewBox="0 0 16 15"><path d="M3 3l10 9M13 3l-10 9" stroke="#6c6c6c" stroke-width="3.600" stroke-linecap="round"/></svg>
<svg class="a" style="left:711px;top:599px" width="19" height="18" viewBox="0 0 19 18"><path d="M3 3l8 7M11 3l-8 7" stroke="#6a6a6a" stroke-width="3.200" stroke-linecap="round"/><path d="M3 3l8 7M11 3l-8 7" stroke="#e4e4e4" stroke-width="1.500" stroke-linecap="round"/><path d="M8 8.500l8.500 7M16.500 8.500l-8.500 7" stroke="#626262" stroke-width="3.200" stroke-linecap="round"/></svg>
<div class="a" style="left:740px;top:598px;width:1px;height:24px;background:#a4a4a4;"></div>
<div class="a" style="left:741px;top:598px;width:1px;height:24px;background:#c0c0c0;"></div>
<svg class="a" style="left:754px;top:600px" width="16" height="16" viewBox="0 0 16 16"><path d="M0.5 0.5h7l3 3v9h-10z" fill="#fdfaf0" stroke="#c0a060" stroke-width=".9"/><g stroke="#4a6ab0" stroke-width=".9"><path d="M2 3.5h4M2 5.5h6M2 7.5h6M2 9.5h5"/></g><path d="M8.500 9.500l5.500 5.500M14 9.500l-5.500 5.500" stroke="#8a8a8a" stroke-width="2.200"/></svg>
<svg class="a" style="left:780px;top:600px" width="16" height="17" viewBox="0 0 16 17"><rect x="2.500" y="1" width="13" height="13" fill="#e8eef8" stroke="#6a86c0" stroke-width=".9"/><rect x="3.500" y="2" width="8" height="5" fill="#fff"/><rect x="12" y="2" width="3" height="11" fill="#d0dcf0" stroke="#6a86c0" stroke-width=".6"/><rect x="1" y="9.500" width="7.500" height="6" rx="1" fill="#e8a820" stroke="#a06a08"/><path d="M2.800 9.500V8a2 2 0 0 1 4 0v1.500" fill="none" stroke="#a06a08" stroke-width="1.300"/></svg>
<svg class="a" style="left:807px;top:600px" width="18" height="16" viewBox="0 0 18 16"><path d="M0.5 0.5h7l3 3v9h-10z" fill="#fdfaf0" stroke="#c0a060" stroke-width=".9"/><g stroke="#4a6ab0" stroke-width=".9"><path d="M2 3.5h4M2 5.5h6M2 7.5h6M2 9.5h5"/></g><path d="M16 3.500v6.500H9.500M12 7l-3 3 3 3" fill="none" stroke="#d8a020" stroke-width="2"/><path d="M16 3.500v6.500H9.500M12 7l-3 3 3 3" fill="none" stroke="#fbe8a8" stroke-width=".8"/></svg>
<div class="a" style="left:829px;top:595px;width:26px;height:26px;background:linear-gradient(#a6a6a6,#b8b8b8);border:1px solid #808080;border-radius:4px;"></div>
<div class="a" style="left:856px;top:595px;width:26px;height:26px;background:linear-gradient(#a6a6a6,#b8b8b8);border:1px solid #808080;border-radius:4px;"></div>
<svg class="a" style="left:832px;top:599px" width="20" height="18" viewBox="0 0 20 18"><rect x="6.500" y=".8" width="12" height="8" rx="1" fill="#f4f8fe" stroke="#3f76c0" stroke-width="1.300"/><path d="M9 3.500h7M9 5.800h5" stroke="#3f76c0" stroke-width="1"/><rect x=".8" y="7.500" width="7.500" height="5.500" rx=".8" fill="#dce8f8" stroke="#2f5fa8" stroke-width="1.200"/><path d="M3.500 13.500h2.500v1.500h-2.500zM1.500 16h6.500" stroke="#2f5fa8" stroke-width="1.200" fill="#2f5fa8"/></svg>
<svg class="a" style="left:859px;top:599px" width="20" height="18" viewBox="0 0 20 18"><rect x="6.500" y=".8" width="12" height="8" rx="1" fill="#f4f8fe" stroke="#3f76c0" stroke-width="1.300"/><path d="M9 3.500h7M9 5.800h5" stroke="#3f76c0" stroke-width="1"/><rect x="7.200" y="1.500" width="10.600" height="6.600" fill="#fdf4f4"/><path d="M9 2.500l4 4.500M13 2.500l-4 4.500" stroke="#e02020" stroke-width="1.700"/><path d="M14.500 3.500h2.500M14.500 6h2.500" stroke="#e06060" stroke-width="1"/><rect x=".8" y="7.500" width="7.500" height="5.500" rx=".8" fill="#dce8f8" stroke="#2f5fa8" stroke-width="1.200"/><path d="M3.500 13.500h2.500v1.500h-2.500zM1.500 16h6.500" stroke="#2f5fa8" stroke-width="1.200" fill="#2f5fa8"/></svg>
<div class="a" style="left:889px;top:598px;width:1px;height:24px;background:#a4a4a4;"></div>
<div class="a" style="left:890px;top:598px;width:1px;height:24px;background:#c0c0c0;"></div>
<svg class="a" style="left:904px;top:600px" width="16" height="16" viewBox="0 0 16 16"><rect x=".5" y="5.500" width="12" height="9.500" fill="#fdfdf6" stroke="#8a9ab0"/><rect x=".5" y="5" width="12" height="2.500" fill="#3f86d6"/><path d="M7.500 10l2.500-2.500" stroke="#555" stroke-width="1"/><path d="M8 6.500l3.500-5.500 3.500 2.500-4 4.500z" fill="#2fa04a" stroke="#1a7030" stroke-width=".8"/></svg>
<svg class="a" style="left:931px;top:601px" width="14" height="15" viewBox="0 0 14 15"><rect x="1" y=".8" width="12" height="9.500" rx="1.500" fill="#f2f7fd" stroke="#2f5fa8" stroke-width="1.600"/><path d="M3.500 4h6M3.500 6.500h4" stroke="#2f5fa8" stroke-width="1"/><path d="M5.500 10.500h3v1.500h-3zM2 13.500h10" stroke="#2f5fa8" stroke-width="1.400" fill="#2f5fa8"/></svg>
<svg class="a" style="left:955px;top:606px" width="10" height="6" viewBox="0 0 10 6"><path d="M0 0.3h10l-5 5.4z" fill="#8a8a8a"/></svg>
<svg class="a" style="left:976px;top:601px" width="17" height="15" viewBox="0 0 17 15"><rect x=".5" y="3.500" width="13" height="10.500" fill="#f6fbff" stroke="#a88c48" stroke-width="1"/>
<rect x="0" y="2.500" width="13.500" height="2.800" fill="#3f86d6"/><path d="M3 14c5-.5 8-3 9.500-7.500" stroke="#f6dc98" stroke-width="1.300" fill="none"/>
<path d="M11.500 0l1.300 2.200 2.200 1.300-2.200 1.300-1.300 2.200-1.300-2.200-2.200-1.300 2.200-1.300z" fill="#fffbe8" stroke="#c49618" stroke-width="1"/></svg>
<svg class="a" style="left:1001px;top:606px" width="10" height="6" viewBox="0 0 10 6"><path d="M0 0.3h10l-5 5.4z" fill="#2b2b2b"/></svg>
<div class="clip" style="left:260px;top:625px;width:759px;height:17px;"><div style="position:absolute;left:-260px;top:-625px;">
<span id="cd1" class="t s" style="left:260.50px;top:625.20px;font-size:13px;color:#383838;letter-spacing:-0.092px;">&lt;terminated&gt;</span>
<span id="cd2" class="t s" style="left:338.75px;top:625.20px;font-size:13px;color:#383838;letter-spacing:-0.303px;">ProductTest.verifyAddProductWithRequestPayloadAsMap</span>
<span id="cd3" class="t s" style="left:661.25px;top:625.20px;font-size:13px;color:#383838;letter-spacing:-0.422px;">[TestNG]</span>
<span id="cd4" class="t s" style="left:712.75px;top:625.20px;font-size:13px;color:#383838;letter-spacing:-0.126px;">/usr/lib/jvm/java-11-openjdk-amd64/bin/java</span>
<span id="cd5" class="t s" style="left:965.40px;top:625.20px;font-size:13px;color:#383838;letter-spacing:-0.458px;">(Feb 4, 20</span>
</div></div>
<div class="a" style="left:260px;top:641px;width:759px;height:1px;background:#e4e4e4;"></div>
<div class="clip" style="left:260px;top:642px;width:743px;height:43px;"><div style="position:absolute;left:-260px;top:-642px;">
<span class="t m" style="left:262.300px;top:633.27px;font-size:14px;color:#000;">{</span>
<span class="t m" style="left:262.300px;top:650.27px;font-size:14px;color:#000;">    &quot;id&quot;: 9999680,</span>
<span class="t m" style="left:262.300px;top:667.27px;font-size:14px;color:#000;">    &quot;image&quot;: &quot;Samsung Mobile&quot;,</span>
</div></div>
<div class="a" style="left:305.5px;top:684.5px;width:1.5px;height:1.2px;background:#6a6a6a;"></div>
<div class="a" style="left:310px;top:684.5px;width:1.5px;height:1.2px;background:#6a6a6a;"></div>
<div class="a" style="left:320.5px;top:684.5px;width:1.5px;height:1.2px;background:#6a6a6a;"></div>
<div class="a" style="left:331px;top:684.5px;width:1.5px;height:1.2px;background:#6a6a6a;"></div>
<div class="a" style="left:346.5px;top:684.5px;width:1.5px;height:1.2px;background:#6a6a6a;"></div>
<div class="a" style="left:1003px;top:642px;width:16px;height:44px;background:#f4f4f4;"></div>
<div class="a" style="left:260px;top:686px;width:743px;height:16px;background:linear-gradient(90deg,#f0eef1 0,#f0eef1 261px,#fff 261px);border-top:1px solid #e2e0e2;"></div>
<div class="a" style="left:1003px;top:686px;width:16px;height:16px;background:#b4b2b4;"></div>
<div class="a" style="left:1007px;top:646px;width:9px;height:42px;background:#dcdcdc;border:1px solid #7a7a7a;border-radius:5px;"></div>
<div class="a" style="left:263px;top:690px;width:737px;height:9px;background:linear-gradient(90deg,#dddbde 0,#dddbde 258px,#d6d4d6 258px);border:1px solid #7a7a7a;border-radius:5px;"></div>
<div class="a" style="left:695px;top:708.0px;width:2px;height:3px;background:#cbbfac;"></div>
<div class="a" style="left:981px;top:708.0px;width:2px;height:3px;background:#cbbfac;"></div>
<div class="a" style="left:695px;top:714.5px;width:2px;height:3px;background:#cbbfac;"></div>
<div class="a" style="left:981px;top:714.5px;width:2px;height:3px;background:#cbbfac;"></div>
<div class="a" style="left:695px;top:721.0px;width:2px;height:3px;background:#cbbfac;"></div>
<div class="a" style="left:981px;top:721.0px;width:2px;height:3px;background:#cbbfac;"></div>
<div class="a" style="left:695px;top:727.5px;width:2px;height:3px;background:#cbbfac;"></div>
<div class="a" style="left:981px;top:727.5px;width:2px;height:3px;background:#cbbfac;"></div>
<div class="a" style="left:985px;top:702px;width:34px;height:33px;background:linear-gradient(#d2d2d2,#b8b8b8 85%,#9a9a9a);"></div>
<svg class="a" style="left:997px;top:710px" width="12" height="17" viewBox="0 0 12 17"><path d="M6 .8a4.500 4.500 0 0 0-2.500 8.200v2h5v-2A4.500 4.500 0 0 0 6 .8z" fill="#fbe9a0" stroke="#e0a820" stroke-width="1"/><path d="M4 12h4v2.500h-4z" fill="#5a7ab8" stroke="#3a5a98" stroke-width=".6"/><path d="M5 15.500h2" stroke="#3a5a98"/></svg>
<div class="a" style="left:0px;top:735px;width:1024px;height:1px;background:#9a9a9a;"></div>
<div class="a" style="left:0px;top:736px;width:1024px;height:32px;background:#1b2735;"></div>
<svg class="a" style="left:5px;top:740px" width="24" height="24" viewBox="0 0 24 24"><circle cx="12" cy="12" r="12" fill="#0b49b2"/><path d="M5.200 8.800c-.3-2 1.800-2.600 2.500-.8l.6 1.200c-.2-3 2.700-3.400 3-.6l.3 1.300 3 .7 1.500.8c2.500.4 3.600 1.500 2.900 3-.6 1.400-2.600 2.200-5 3-3 1-6 2.300-8.400 1.400-1.600-.6-2-2.300-1.500-4.300.4-1.700 1.400-3.400 1.100-5.700z" fill="#fff"/><path d="M14.300 10.500l1.200-6.200M16.300 11l3.400-5.700" stroke="#fff" stroke-width="1.300" stroke-linecap="round"/></svg>
<div class="a" style="left:36px;top:749px;width:4px;height:2px;background:#26282a;"></div>
<div class="a" style="left:36px;top:752px;width:4px;height:2px;background:#26282a;"></div>
<div class="a" style="left:36px;top:755px;width:4px;height:2px;background:#26282a;"></div>
<div class="a" style="left:43px;top:738px;width:198px;height:29px;background:linear-gradient(#2c5f99,#284563);border:1px solid #35659c;border-radius:3px;"></div>
<svg class="a" style="left:48px;top:745px" width="16" height="16" viewBox="0 0 16 16"><circle cx="8" cy="8" r="7.200" fill="#2c2255"/><path d="M4.500 1.600a7.300 7.300 0 0 0 0 12.800" fill="none" stroke="#f7941e" stroke-width="1.100"/><rect x="1.500" y="5.500" width="14" height="4.500" fill="#e9e6f2"/><path d="M1.500 7.700h14" stroke="#a9a2c4" stroke-width="1.500"/><path d="M3.300 12a6 6 0 0 0 10 0z" fill="#4a3a8e" opacity=".7"/></svg>
<span id="tb1" class="t s" style="left:69.50px;top:744.50px;font-size:13px;color:#ececec;letter-spacing:-0.288px;">eclipse-workspace - ApiTest...</span>
<svg class="a" style="left:246px;top:744px" width="16" height="16" viewBox="0 0 16 16"><circle cx="8" cy="8" r="7.500" fill="#e33b2e"/><path d="M8 8L1.500 4.200A7.500 7.500 0 0 0 7 15.400z" fill="#2a9d48"/><path d="M8 8l-1 7.400A7.500 7.500 0 0 0 14.500 4.200z" fill="#f8c21c"/><path d="M8 8L14.500 4.200A7.500 7.500 0 0 0 1.500 4.200z" fill="#e33b2e"/><circle cx="8" cy="8" r="3.400" fill="#fff"/><circle cx="8" cy="8" r="2.600" fill="#3f86e8"/></svg>
<span id="tb2" class="t s" style="left:268.50px;top:744.50px;font-size:13px;color:#b9bcc2;letter-spacing:-0.360px;">Swagger UI - Google Chrome</span>
<div class="a" style="left:443px;top:738px;width:198px;height:29px;background:linear-gradient(#2a72cf,#2c5c98);border:1px solid #3a7ad0;border-radius:2px;"></div>
<svg class="a" style="left:446px;top:744px" width="18" height="17" viewBox="0 0 18 17"><rect x="3" y="1" width="13" height="11" fill="#6a7a90" stroke="#a8b4c4"/><rect x="1" y="3.500" width="13" height="11" fill="#5a6a80" stroke="#b8c4d4"/><ellipse cx="7" cy="9.500" rx="3.500" ry="2.500" fill="#c8d0dc"/><path d="M1 15.500h14" stroke="#8a98ac" stroke-width="1.500"/></svg>
<span id="tb3" class="t s" style="left:469.00px;top:744.50px;font-size:13px;color:#f4f4f4;letter-spacing:-0.495px;">[Rest Assured Framework.J</span>
<div class="a" style="left:618px;top:743px;width:262px;height:30px;background:rgba(0,0,0,.88);border-radius:7px;"></div>
<span id="tip" class="t s" style="left:624.60px;top:747.50px;font-size:13px;color:#dcdcdc;letter-spacing:-0.465px;">Rest Assured Framework.JPG - Image Viewer</span>
</div>
</body></html>
